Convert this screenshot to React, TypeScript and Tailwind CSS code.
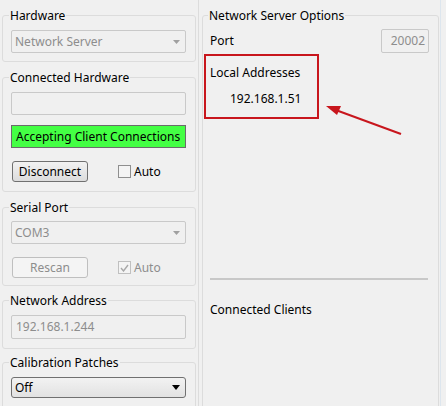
import React from 'react';

const font = { fontFamily: '"Noto Sans", "Open Sans", sans-serif' };

function Group({ title, className, children }: { title: string; className?: string; children?: React.ReactNode }) {
  return (
    <div className={`border border-[#dcdcdc] rounded-[3px] pl-[8px] pr-[9px] shrink-0 ${className ?? ''}`}>
      <div className="-mt-[8px] -ml-[2px] px-[1px] w-fit bg-[#f0f0f0] text-[12px] leading-[16px] text-black">{title}</div>
      {children}
    </div>
  );
}

function Combo({ value, enabled }: { value: string; enabled?: boolean }) {
  if (enabled) {
    return (
      <div className="h-[21px] flex items-center justify-between rounded-[3px] border border-[#707070] bg-gradient-to-b from-[#f2f2f2] to-[#e2e2e2] pl-[3px] pr-[5px] text-[12px] text-black">
        <span>{value}</span>
        <svg width="8" height="5" viewBox="0 0 8 5"><path d="M0 0h8L4 5z" fill="#000" /></svg>
      </div>
    );
  }
  return (
    <div className="h-[23px] flex items-center justify-between rounded-[2px] border border-[#c9c9c9] bg-[#f0f0f0] pl-[3px] pr-[5px] text-[12px] text-[#8d8d8d]">
      <span>{value}</span>
      <svg width="7" height="4" viewBox="0 0 7 4"><path d="M0 0h7L3.5 4z" fill="#a0a0a0" /></svg>
    </div>
  );
}

function Check({ checked, disabled }: { checked?: boolean; disabled?: boolean }) {
  return (
    <div className="flex items-center gap-[3px] text-[12px]">
      <div className={`w-[13px] h-[13px] border ${disabled ? 'border-[#c0c0c0]' : 'border-[#8f8f8f]'} bg-[#f4f4f4] flex items-center justify-center`}>
        {checked && (
          <svg width="9" height="8" viewBox="0 0 9 8"><path d="M1 4l2.5 3L8 1" fill="none" stroke="#a8a8a8" strokeWidth="1.4" /></svg>
        )}
      </div>
      <span className={disabled ? 'text-[#8d8d8d]' : 'text-black'}>Auto</span>
    </div>
  );
}

function Button({ label, disabled }: { label: string; disabled?: boolean }) {
  return (
    <div
      className={`w-[76px] h-[21px] flex items-center justify-center rounded-[3px] border text-[12px] ${
        disabled
          ? 'border-[#bfbfbf] bg-[#f4f4f4] text-[#8d8d8d]'
          : 'border-[#707070] bg-gradient-to-b from-[#f2f2f2] to-[#dcdcdc] text-black'
      }`}
    >
      {label}
    </div>
  );
}

export default function App() {
  return (
    <div className="relative w-[446px] h-[406px] bg-[#f0f0f0] flex overflow-hidden" style={font}>
      {/* left column */}
      <div className="w-[196px] pl-[2px] pt-[15px] flex flex-col shrink-0">
        <Group title="Hardware" className="h-[47px]">
          <div className="mt-[6px]">
            <Combo value="Network Server" />
          </div>
        </Group>

        <Group title="Connected Hardware" className="h-[115px] mt-[15px]">
          <div className="mt-[6px] h-[23px] border border-[#c9c9c9] rounded-[2px] bg-[#f0f0f0]" />
          <div className="mt-[10px] h-[23px] border border-[#6b6b6b] bg-[#44ff44] flex items-center pl-[4px] text-[12px] text-black">
            Accepting Client Connections
          </div>
          <div className="mt-[13px] flex items-center pl-[1px]">
            <Button label="Disconnect" />
            <div className="ml-[30px]">
              <Check />
            </div>
          </div>
        </Group>

        <Group title="Serial Port" className="h-[79px] mt-[15px]">
          <div className="mt-[5px]">
            <Combo value="COM3" />
          </div>
          <div className="mt-[13px] flex items-center pl-[1px]">
            <Button label="Rescan" disabled />
            <div className="ml-[30px]">
              <Check checked disabled />
            </div>
          </div>
        </Group>

        <Group title="Network Address" className="h-[49px] mt-[14px]">
          <div className="mt-[6px] h-[24px] border border-[#c9c9c9] rounded-[2px] bg-[#f0f0f0] flex items-center pl-[4px] text-[12px] text-[#8d8d8d]">
            192.168.1.244
          </div>
        </Group>

        <Group title="Calibration Patches" className="h-[60px] mt-[13px]">
          <div className="mt-[6px]">
            <Combo value="Off" enabled />
          </div>
        </Group>
      </div>

      {/* splitter */}
      <div className="w-[1px] bg-[#dcdcdc] ml-[2px] mr-[3px] shrink-0" />

      {/* right column */}
      <div className="w-[237px] pt-[15px] shrink-0">
        <Group title="Network Server Options" className="h-[420px] !pl-[7px] !pr-[6px]">
          <div className="mt-[5px] flex items-center justify-between pr-[3px]">
            <span className="text-[12px] text-black">Port</span>
            <div className="w-[48px] h-[24px] border border-[#c9c9c9] rounded-[2px] bg-[#f0f0f0] flex items-center justify-end pr-[3px] text-[12px] text-[#8d8d8d]">
              20002
            </div>
          </div>
          <div className="mt-[1px] ml-[-6px] w-[115px] h-[65px] border-2 border-[#c8161d] pl-[4px] pt-[8px] text-[12px] text-black">
            <div>Local Addresses</div>
            <div className="mt-[8px] ml-[20px]">192.168.1.51</div>
          </div>
          <div className="mt-[159px] h-[2px] bg-[#c8c8c8] mr-[4px]" />
          <div className="mt-[21px] text-[12px] text-black">Connected Clients</div>
        </Group>
      </div>
      <div className="w-[1px] ml-[1px] bg-[#dde6ee]" />

      {/* annotation arrow */}
      <svg className="absolute left-0 top-0 pointer-events-none" width="446" height="406">
        <line x1="401" y1="134" x2="333" y2="109" stroke="#c8161d" strokeWidth="2" />
        <path d="M326 106 L341 106 L337 115 Z" fill="#c8161d" />
      </svg>
    </div>
  );
}
